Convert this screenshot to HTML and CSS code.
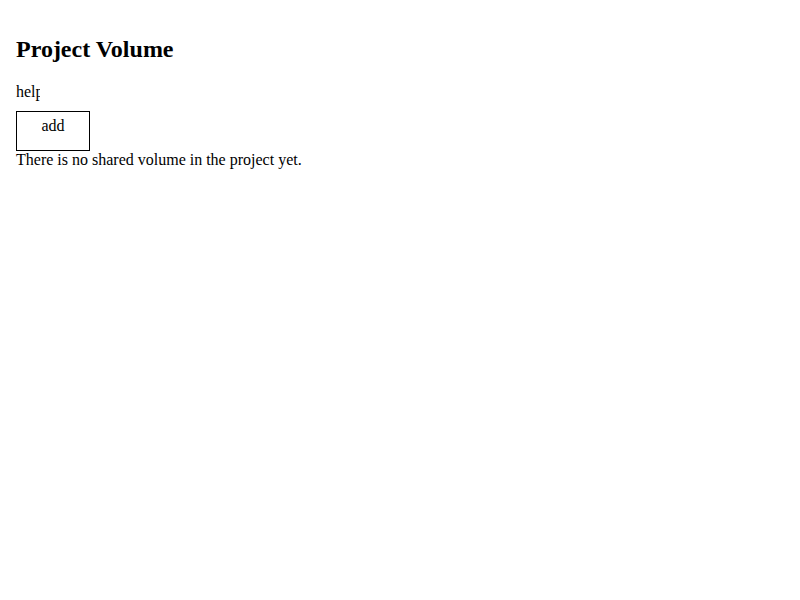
FILE: index.html
```html
<!DOCTYPE html>
<html>
<head>
<meta charset="utf-8">
<title>Project Volume</title>
<link rel="stylesheet" href="styles.css">
</head>
<body>
<div class="page">
  <h2 class="title">Project Volume</h2>
  <div class="help">help</div>
  <div class="add-btn">add</div>
  <div class="empty">There is no shared volume in the project yet.</div>
</div>
</body>
</html>
```
FILE: styles.css
```css
body {
  margin: 8px;
  font-family: "Liberation Serif", "Times New Roman", serif;
  font-size: 16px;
  color: #000;
  background: #fff;
}
.page {
  padding: 8px;
}
.title {
  font-size: 24px;
  font-weight: bold;
  margin: 19.92px 0;
}
.help {
  width: 24px;
  overflow: hidden;
  white-space: nowrap;
}
.add-btn {
  box-sizing: border-box;
  width: 74px;
  height: 40px;
  margin-top: 10px;
  padding-top: 5px;
  border: 1px solid #000;
  text-align: center;
}
```
